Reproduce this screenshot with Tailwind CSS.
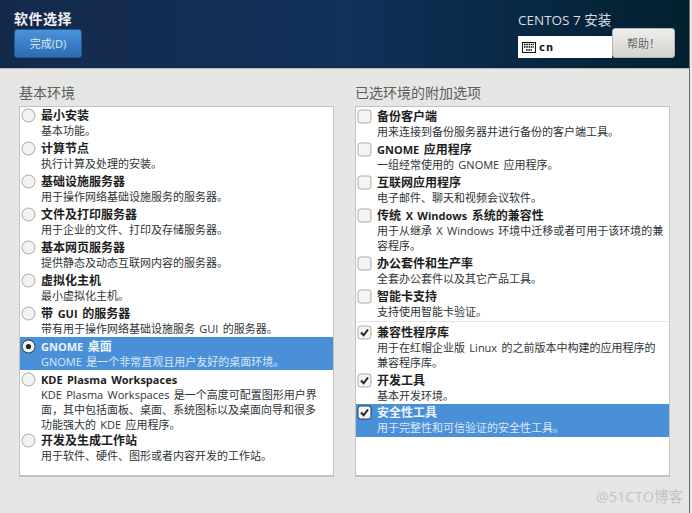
<!DOCTYPE html>
<html lang="zh"><head><meta charset="utf-8">
<script src="https://cdn.jsdelivr.net/npm/@tailwindcss/browser@4"></script>
</head>
<body class="m-0 bg-[#e6e6e4]">
<div class="w-[692px] h-[513px] overflow-hidden flex flex-col relative bg-[#e6e6e4] font-['Open_Sans','Noto_Sans_CJK_SC',sans-serif] text-[11px] leading-[15px] text-[#2e3436] [word-spacing:1.5px]">
  <header class="h-[69px] shrink-0 flex justify-between bg-gradient-to-r from-[#142a4b] via-[#12305a] to-[#03202f] border-b border-[#b9bab8] pl-[14px]">
    <div class="flex flex-col">
      <div class="mt-[10px] text-[14px] leading-[18px] font-bold tracking-[0.5px] text-[#f0f2f4]">软件选择</div>
      <div class="mt-[1px] w-[68px] h-[29px] rounded-[3px] bg-gradient-to-b from-[#4a92db] to-[#2a6db5] border border-[#23588f] flex items-center justify-center text-[#dfe9f4] text-[11px]">完成(D)</div>
    </div>
    <div class="flex flex-col items-start w-[174px]">
      <div class="mt-[11px] text-[13.5px] leading-[18px] text-[#d8dde2] whitespace-nowrap [word-spacing:0]">CENTOS 7 安装</div>
      <div class="flex items-start">
        <div class="w-[94px] h-[22px] mt-[7px] bg-white flex items-center gap-[3px] pl-[4px] text-[#1a1a1a] font-bold text-[10px] tracking-[1px] font-['DejaVu_Sans',sans-serif]">
          <svg width="14" height="11" viewBox="0 0 14 11"><rect x="0.5" y="0.5" width="13" height="10" fill="#fff" stroke="#111"/><path d="M2 2.5h10M2 5h10M4 8h6" stroke="#111" stroke-width="1.6" stroke-dasharray="1.6 .7"/></svg>
          <span>cn</span>
        </div>
        <div class="w-[63px] h-[30px] -mt-[1px] rounded-[3px] bg-gradient-to-b from-[#eeeeec] to-[#d3d3d0] border border-[#b5b5b2] flex items-center justify-center text-[#666] text-[11px]">帮助！</div>
      </div>
    </div>
  </header>
  <main class="flex-1 grid grid-cols-[315px_315px] gap-x-[21px] pl-[19px] pt-[15px]">
    <section>
      <h2 class="text-[14px] leading-[18px] text-[#5a5e5f] font-normal mb-[4px]">基本环境</h2>
      <div class="h-[371px] bg-white border border-[#c3c4c1] border-b-2">
        <div class="flex h-[32px] pt-[1px]"><span class="w-[21px] shrink-0 pl-[1px]"><svg width="15" height="15" viewBox="0 0 15 15"><circle cx="7.5" cy="7.5" r="6.5" fill="#f2f2f0" stroke="#aaaaa6"/></svg></span><div><div class="text-[12px] font-bold text-[#1e1e1e]">最小安装</div><div>基本功能。</div></div></div>
        <div class="flex h-[33px] pt-[2px]"><span class="w-[21px] shrink-0 pl-[1px]"><svg width="15" height="15" viewBox="0 0 15 15"><circle cx="7.5" cy="7.5" r="6.5" fill="#f2f2f0" stroke="#aaaaa6"/></svg></span><div><div class="text-[12px] font-bold text-[#1e1e1e]">计算节点</div><div>执行计算及处理的安装。</div></div></div>
        <div class="flex h-[33px] pt-[2px]"><span class="w-[21px] shrink-0 pl-[1px]"><svg width="15" height="15" viewBox="0 0 15 15"><circle cx="7.5" cy="7.5" r="6.5" fill="#f2f2f0" stroke="#aaaaa6"/></svg></span><div><div class="text-[12px] font-bold text-[#1e1e1e]">基础设施服务器</div><div>用于操作网络基础设施服务的服务器。</div></div></div>
        <div class="flex h-[33px] pt-[2px]"><span class="w-[21px] shrink-0 pl-[1px]"><svg width="15" height="15" viewBox="0 0 15 15"><circle cx="7.5" cy="7.5" r="6.5" fill="#f2f2f0" stroke="#aaaaa6"/></svg></span><div><div class="text-[12px] font-bold text-[#1e1e1e]">文件及打印服务器</div><div>用于企业的文件、打印及存储服务器。</div></div></div>
        <div class="flex h-[33px] pt-[2px]"><span class="w-[21px] shrink-0 pl-[1px]"><svg width="15" height="15" viewBox="0 0 15 15"><circle cx="7.5" cy="7.5" r="6.5" fill="#f2f2f0" stroke="#aaaaa6"/></svg></span><div><div class="text-[12px] font-bold text-[#1e1e1e]">基本网页服务器</div><div>提供静态及动态互联网内容的服务器。</div></div></div>
        <div class="flex h-[33px] pt-[2px]"><span class="w-[21px] shrink-0 pl-[1px]"><svg width="15" height="15" viewBox="0 0 15 15"><circle cx="7.5" cy="7.5" r="6.5" fill="#f2f2f0" stroke="#aaaaa6"/></svg></span><div><div class="text-[12px] font-bold text-[#1e1e1e]">虚拟化主机</div><div>最小虚拟化主机。</div></div></div>
        <div class="flex h-[33px] pt-[2px]"><span class="w-[21px] shrink-0 pl-[1px]"><svg width="15" height="15" viewBox="0 0 15 15"><circle cx="7.5" cy="7.5" r="6.5" fill="#f2f2f0" stroke="#aaaaa6"/></svg></span><div><div class="text-[12px] font-bold text-[#1e1e1e]">带 <span class="text-[11px]">GUI</span> 的服务器</div><div>带有用于操作网络基础设施服务 GUI 的服务器。</div></div></div>
        <div class="flex h-[33px] pt-[2px] bg-[#4a90d9] text-[#dbe8f6]"><span class="w-[21px] shrink-0 pl-[1px]"><svg width="15" height="15" viewBox="0 0 15 15"><circle cx="7.5" cy="7.5" r="6.5" fill="#f2f2f0" stroke="#2c3a4a"/><circle cx="7.5" cy="7.5" r="2.6" fill="#222"/></svg></span><div><div class="text-[12px] font-bold text-[#eef4fb]"><span class="text-[11px]">GNOME</span> 桌面</div><div>GNOME 是一个非常直观且用户友好的桌面环境。</div></div></div>
        <div class="flex h-[61px] pt-[2px]"><span class="w-[21px] shrink-0 pl-[1px]"><svg width="15" height="15" viewBox="0 0 15 15"><circle cx="7.5" cy="7.5" r="6.5" fill="#f2f2f0" stroke="#aaaaa6"/></svg></span><div class="w-[285px]"><div class="text-[11px] font-bold text-[#1e1e1e]">KDE Plasma Workspaces</div><div>KDE Plasma Workspaces 是一个高度可配置图形用户界面，其中包括面板、桌面、系统图标以及桌面向导和很多功能强大的 KDE 应用程序。</div></div></div>
        <div class="flex h-[33px] pt-[2px]"><span class="w-[21px] shrink-0 pl-[1px]"><svg width="15" height="15" viewBox="0 0 15 15"><circle cx="7.5" cy="7.5" r="6.5" fill="#f2f2f0" stroke="#aaaaa6"/></svg></span><div><div class="text-[12px] font-bold text-[#1e1e1e]">开发及生成工作站</div><div>用于软件、硬件、图形或者内容开发的工作站。</div></div></div>
      </div>
    </section>
    <section>
      <h2 class="text-[14px] leading-[18px] text-[#5a5e5f] font-normal mb-[4px]">已选环境的附加选项</h2>
      <div class="h-[371px] bg-white border border-[#c3c4c1] border-b-2">
        <div class="flex h-[33px] pt-[2px]"><span class="w-[21px] shrink-0 pl-[1px]"><svg width="15" height="15" viewBox="0 0 15 15"><rect x="1" y="1" width="13" height="13" rx="2.5" fill="#f4f4f2" stroke="#aaaaa6"/></svg></span><div><div class="text-[12px] font-bold text-[#1e1e1e]">备份客户端</div><div>用来连接到备份服务器并进行备份的客户端工具。</div></div></div>
        <div class="flex h-[33px] pt-[2px]"><span class="w-[21px] shrink-0 pl-[1px]"><svg width="15" height="15" viewBox="0 0 15 15"><rect x="1" y="1" width="13" height="13" rx="2.5" fill="#f4f4f2" stroke="#aaaaa6"/></svg></span><div><div class="text-[12px] font-bold text-[#1e1e1e]"><span class="text-[11px]">GNOME</span> 应用程序</div><div>一组经常使用的 GNOME 应用程序。</div></div></div>
        <div class="flex h-[33px] pt-[2px]"><span class="w-[21px] shrink-0 pl-[1px]"><svg width="15" height="15" viewBox="0 0 15 15"><rect x="1" y="1" width="13" height="13" rx="2.5" fill="#f4f4f2" stroke="#aaaaa6"/></svg></span><div><div class="text-[12px] font-bold text-[#1e1e1e]">互联网应用程序</div><div>电子邮件、聊天和视频会议软件。</div></div></div>
        <div class="flex h-[48px] pt-[2px]"><span class="w-[21px] shrink-0 pl-[1px]"><svg width="15" height="15" viewBox="0 0 15 15"><rect x="1" y="1" width="13" height="13" rx="2.5" fill="#f4f4f2" stroke="#aaaaa6"/></svg></span><div class="w-[290px]"><div class="text-[12px] font-bold text-[#1e1e1e]">传统 <span class="text-[11px]">X Windows</span> 系统的兼容性</div><div>用于从继承 X Windows 环境中迁移或者可用于该环境的兼容程序。</div></div></div>
        <div class="flex h-[33px] pt-[2px]"><span class="w-[21px] shrink-0 pl-[1px]"><svg width="15" height="15" viewBox="0 0 15 15"><rect x="1" y="1" width="13" height="13" rx="2.5" fill="#f4f4f2" stroke="#aaaaa6"/></svg></span><div><div class="text-[12px] font-bold text-[#1e1e1e]">办公套件和生产率</div><div>全套办公套件以及其它产品工具。</div></div></div>
        <div class="flex h-[34px] pt-[2px]"><span class="w-[21px] shrink-0 pl-[1px]"><svg width="15" height="15" viewBox="0 0 15 15"><rect x="1" y="1" width="13" height="13" rx="2.5" fill="#f4f4f2" stroke="#aaaaa6"/></svg></span><div><div class="text-[12px] font-bold text-[#1e1e1e]">智能卡支持</div><div>支持使用智能卡验证。</div></div></div>
        <div class="h-px mx-[1px] mb-[2px] bg-[#e4e4e2]"></div>
        <div class="flex h-[48px] pt-[1px]"><span class="w-[21px] shrink-0 pl-[1px]"><svg width="15" height="15" viewBox="0 0 15 15"><rect x="1" y="1" width="13" height="13" rx="2.5" fill="#f4f4f2" stroke="#aaaaa6"/><path d="M4 7.5l2.6 2.8L11 4.5" fill="none" stroke="#222" stroke-width="2"/></svg></span><div class="w-[285px]"><div class="text-[12px] font-bold text-[#1e1e1e]">兼容性程序库</div><div>用于在红帽企业版 Linux 的之前版本中构建的应用程序的兼容程序库。</div></div></div>
        <div class="flex h-[32px] pt-[1px]"><span class="w-[21px] shrink-0 pl-[1px]"><svg width="15" height="15" viewBox="0 0 15 15"><rect x="1" y="1" width="13" height="13" rx="2.5" fill="#f4f4f2" stroke="#aaaaa6"/><path d="M4 7.5l2.6 2.8L11 4.5" fill="none" stroke="#222" stroke-width="2"/></svg></span><div><div class="text-[12px] font-bold text-[#1e1e1e]">开发工具</div><div>基本开发环境。</div></div></div>
        <div class="flex h-[33px] pt-[1px] bg-[#4a90d9] text-[#dbe8f6]"><span class="w-[21px] shrink-0 pl-[1px]"><svg width="15" height="15" viewBox="0 0 15 15"><rect x="1" y="1" width="13" height="13" rx="2.5" fill="#f4f4f2" stroke="#2c3a4a"/><path d="M4 7.5l2.6 2.8L11 4.5" fill="none" stroke="#222" stroke-width="2"/></svg></span><div><div class="text-[12px] font-bold text-[#eef4fb]">安全性工具</div><div>用于完整性和可信验证的安全性工具。</div></div></div>
      </div>
    </section>
  </main>
  <div class="absolute right-[9px] bottom-[7px] text-[14.5px] leading-[18px] text-[#c4c4c2]">@51CTO博客</div>
  <div class="absolute right-0 top-0 bottom-0 w-[3px] bg-[#e9e9e7] border-l border-[#6a6a6a]"></div>
</div>
</body></html>
